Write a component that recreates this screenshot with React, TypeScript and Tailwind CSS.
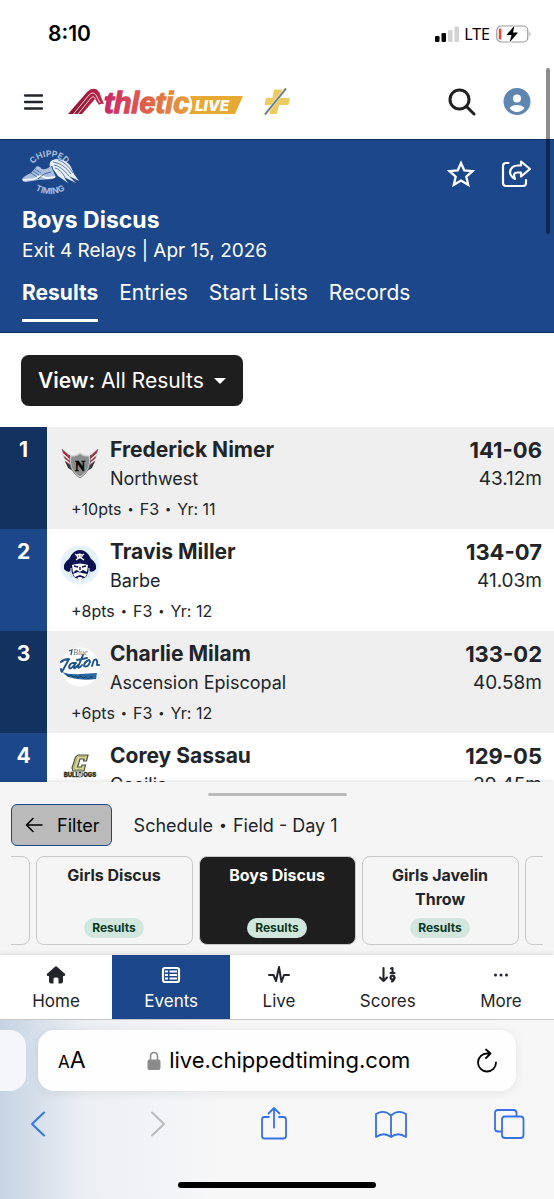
import type { ReactNode } from "react";

type Result = {
  place: number;
  name: string;
  team: string;
  mark: string;
  metric: string;
  meta: string[];
  logo: ReactNode;
};

function WingedShieldLogo() {
  return (
    <svg viewBox="0 0 40 40" className="size-10">
      <path d="M2 6 L12 15 L13 24 L6 20 Z" fill="#a32c40" stroke="#777" strokeWidth=".6" />
      <path d="M38 6 L28 15 L27 24 L34 20 Z" fill="#a32c40" stroke="#777" strokeWidth=".6" />
      <path d="M3 11 L12 19 M4 16 L13 23 M37 11 L28 19 M36 16 L27 23" stroke="#f3f3f3" strokeWidth="1.500" />
      <path d="M5 18 L13 25 L13 28 L8 25 Z M35 18 L27 25 L27 28 L32 25 Z" fill="#34343a" />
      <path d="M11 13 Q17 13 20 10 Q23 13 29 13 Q32 27 20 34 Q8 27 11 13 Z" fill="#8b8c8e" stroke="#d2d2d2" strokeWidth="1.200" />
      <path d="M9.500 12 Q8 28 20 35 Q32 28 30.500 12" fill="none" stroke="#616265" strokeWidth=".7" />
      <text x="20" y="28" textAnchor="middle" fontSize="14" fontWeight="700" fontFamily="Liberation Serif, serif" fill="#050505" stroke="#050505" strokeWidth=".6">N</text>
    </svg>
  );
}

function PirateLogo() {
  return (
    <svg viewBox="0 0 40 40" className="size-10">
      <circle cx="20" cy="20" r="19.500" fill="#e5f1fb" />
      <path d="M4 24 Q3 18 9 14 Q13 5 20 5 Q27 5 31 14 Q37 18 36 24 Q33 28 29 26 L26 32 L20 35 L14 32 L11 26 Q7 28 4 24 Z" fill="#0d1050" />
      <path d="M15 9 L24 15 M24 9 L16 15" stroke="#fff" strokeWidth="1.400" />
      <ellipse cx="19.500" cy="11" rx="3" ry="2.500" fill="#fff" />
      <path d="M18 11h1M20.500 11h1" stroke="#0d1050" />
      <path d="M12 20 Q20 17 28 20 L27 27 L23 25 L20 27 L16 25 L13 28 Z" fill="#f5f8fc" />
      <path d="M14 21 L18 22 M22 22 L26 21 M20 22v3M17 26 L20 28 L24 26" stroke="#0d1050" strokeWidth="1.400" fill="none" />
      <path d="M13 29 L18 27 L22 28 L27 29 L25 32 L20 30 L15 32 Z M17 33 Q20 31 23 33 L20 36Z" fill="#fff" />
      <path d="M11 23v9h4M29 23v9h-4" fill="none" stroke="#cfd7e5" strokeWidth="1.200" />
    </svg>
  );
}

function GatorsLogo() {
  return (
    <svg viewBox="0 0 40 40" className="size-10">
      <circle cx="20" cy="20" r="19.500" fill="#fff" />
      <text x="13" y="8" fontSize="8" fontStyle="italic" fontFamily="Liberation Serif, serif" fill="#557894">Blue</text>
      <path d="M9 4l3-1-1 5" fill="none" stroke="#26577f" strokeWidth="1.300" />
      <g fill="none" stroke="#1c548b" strokeWidth="1.900" strokeLinecap="round" strokeLinejoin="round">
        <path d="M1 15 Q4 12 9 12 L3 23 Q1 27 1 22" />
        <path d="M16 16 Q10 15 9 20 Q10 24 15 17 L14 21 Q15 22 18 18" />
        <path d="M23 8 L18 20 Q19 22 22 18 M17 13 L27 11" />
        <path d="M29 13 Q24 15 24 19 Q28 21 30 15 Q30 12 27 14 M32 19 L34 13 Q38 11 37 18 L39 18" />
      </g>
      <path d="M2 25 Q10 28 20 27 L37 26 L36 32 Q20 34 8 30 Z" fill="#2868a0" />
      <path d="M6 27l2 2 3-1 2 2 3-1 2 2 3-2 2 2 3-1 2 2 3-2 2 1" fill="none" stroke="#12365c" strokeWidth=".8" />
    </svg>
  );
}

function BulldogsLogo() {
  return (
    <svg viewBox="0 0 40 40" className="size-10">
      <path d="M18 6 H28 L26.500 12 H23.500 L24 10 H20 L17.500 18 H21.500 L22 16 H25.500 L24 22 H13 L12 19 L15.500 8 Z" fill="#d7d79c" stroke="#4c533b" strokeWidth="1.200" />
      <path d="M18.500 7.500 H26 M17 9 L13.800 19 L14.500 20.500H22" fill="none" stroke="#aaa96c" />
      <text x="20" y="28" textAnchor="middle" fontSize="6" fontWeight="900" fontFamily="Inter, sans-serif" fill="#30351d" stroke="#30351d" strokeWidth=".3">BULLDOGS</text>
      <path d="M18 22l2 3 2-3 .5 4-2.500 3-2.500-3z" fill="#b6b9b4" />
    </svg>
  );
}

const results: Result[] = [
  { place: 1, name: "Frederick Nimer", team: "Northwest", mark: "141-06", metric: "43.12m", meta: ["+10pts", "F3", "Yr: 11"], logo: <WingedShieldLogo /> },
  { place: 2, name: "Travis Miller", team: "Barbe", mark: "134-07", metric: "41.03m", meta: ["+8pts", "F3", "Yr: 12"], logo: <PirateLogo /> },
  { place: 3, name: "Charlie Milam", team: "Ascension Episcopal", mark: "133-02", metric: "40.58m", meta: ["+6pts", "F3", "Yr: 12"], logo: <GatorsLogo /> },
  { place: 4, name: "Corey Sassau", team: "Cecilia", mark: "129-05", metric: "39.45m", meta: [], logo: <BulldogsLogo /> },
];

function StatusBar() {
  return (
    <div className="flex h-17 shrink-0 items-center justify-between pr-[22px] pl-12">
      <span className="text-[21px] font-semibold text-black">8:10</span>
      <div className="flex items-center gap-1 text-black">
        <svg viewBox="0 0 26 16" className="h-4 w-[26px]">
          <rect x="1" y="10" width="4.500" height="6" rx="1.300" />
          <rect x="7.500" y="7" width="4.500" height="9" rx="1.300" />
          <rect x="14" y="4" width="4.500" height="12" rx="1.300" fill="#d2d2d2" />
          <rect x="20.500" y="0.500" width="4.500" height="15.500" rx="1.300" fill="#d2d2d2" />
        </svg>
        <span className="font-['Noto_Sans',sans-serif] text-base leading-5">LTE</span>
        <svg viewBox="0 0 36 18" className="ml-0.5 h-[18px] w-9">
          <rect x=".8" y="1" width="31" height="16" rx="4.500" fill="none" stroke="#999" strokeWidth="1.200" />
          <path d="M33.500 6.500 Q35.500 9 33.500 11.500Z" fill="#999" />
          <rect x="2.800" y="3.500" width="2.500" height="11" rx="1" fill="#ef4038" />
          <path d="M18.500 .5 L10.500 10 H15.500 L13.500 17.500 L22 7.500 H17 Z" stroke="#fff" strokeWidth="2" />
          <path d="M18.500 .5 L10.500 10 H15.500 L13.500 17.500 L22 7.500 H17 Z" />
        </svg>
      </div>
    </div>
  );
}

function BrandLogo() {
  return (
    <svg viewBox="0 -2 176 36" className="h-9 w-44" role="img" aria-label="AthleticLIVE">
      <defs>
        <linearGradient id="word" gradientUnits="userSpaceOnUse" x1="36" y1="0" x2="123" y2="0">
          <stop offset="0" stopColor="#c9246b" />
          <stop offset=".4" stopColor="#db574d" />
          <stop offset="1" stopColor="#e5a339" />
        </linearGradient>
        <linearGradient id="peak" x1="0" x2="1">
          <stop offset="0" stopColor="#851730" />
          <stop offset="1" stopColor="#c0264f" />
        </linearGradient>
      </defs>
      <path d="M0 28 L19 6 Q23.500 1 29 3.500 Q32 6 33 11 L36 18 Q33 17 31 19 L27 13 L14 28 Z" fill="url(#peak)" />
      <path d="M5.500 28 L21 9 Q25 5 28 9 L32 17 M10 28 L23 12 Q25.500 9 27.500 13" fill="none" stroke="#fff" strokeWidth=".8" />
      <path d="M122 10 H175 L167 28 H121 Q127 20 122 10 Z" fill="#e5a934" />
      <text x="36" y="27" fontSize="29" fontWeight="700" fontStyle="italic" fontFamily="Liberation Sans, sans-serif" fill="url(#word)" stroke="url(#word)" strokeWidth="1.300">thletic</text>
      <text x="127" y="24.500" fontSize="15" fontWeight="900" fontStyle="italic" fontFamily="Inter, sans-serif" fill="#fff">LIVE</text>
    </svg>
  );
}

function SiteHeader() {
  return (
    <header className="flex h-[71px] shrink-0 items-center bg-white px-[23px] pb-1">
      <button aria-label="Open menu" className="flex items-center">
        <svg viewBox="0 0 20 20" className="size-5" stroke="#212529" strokeWidth="2.300" strokeLinecap="round">
          <path d="M2 3.500h17M2 10h17M2 16.500h17" />
        </svg>
      </button>
      <a href="#home" className="ml-[25px]"><BrandLogo /></a>
      <a href="#plus" aria-label="Plus" className="ml-5">
        <svg viewBox="0 0 28 30" className="h-[30px] w-7">
          <path d="M10 2.500 H18 L16.500 11 H26 L24.500 18 H15 L13 27 H5.500 L7 18 H0.500 L2 11 H8.500 Z" fill="#edca62" />
          <path d="M1 27.500 L22 1.500" stroke="#f6e4b1" strokeWidth="3" />
          <path d="M1 27.500 L22 1.500" stroke="#52799a" strokeWidth="1.700" />
        </svg>
      </a>
      <div className="ml-auto flex items-center gap-[27px]">
        <button aria-label="Search">
          <svg viewBox="0 0 28 28" className="size-7" fill="none" stroke="#212121" strokeWidth="3" strokeLinecap="round">
            <circle cx="11.500" cy="11.500" r="9.500" />
            <path d="M18.500 18.500l7.500 7.500" />
          </svg>
        </button>
        <button aria-label="Account">
          <svg viewBox="0 0 28 28" className="size-7">
            <circle cx="14" cy="13.500" r="13.500" fill="#5d87b1" />
            <circle cx="14" cy="10.500" r="4" fill="#fff" />
            <path d="M6.500 20 Q9 17 14 17 Q19 17 21.500 20 Q18.500 24 14 24 Q9.500 24 6.500 20Z" fill="#fff" />
          </svg>
        </button>
      </div>
    </header>
  );
}

function TimingLogo() {
  return (
    <svg viewBox="0 0 58 48" className="h-12 w-[58px]" role="img" aria-label="Chipped Timing">
      <defs>
        <path id="arcTop" d="M7 27 A20 18 0 0 1 48 27" />
        <path id="arcBottom" d="M2 24 A26 22 0 0 0 54 24" />
      </defs>
      <g fill="#a9bddd" fontFamily="Inter, sans-serif" fontWeight="700" textAnchor="middle">
        <text fontSize="8.500"><textPath href="#arcTop" startOffset="50%">CHIPPED</textPath></text>
        <text fontSize="8.500"><textPath href="#arcBottom" startOffset="50%">TIMING</textPath></text>
      </g>
      <path d="M0 31 Q2 28 9 25 L15 18 L18 19 Q20 23 26 20 L29 18 L32 25 L34 29 L31 31 L16 32 L4 34 Q0 34 0 31Z" fill="#a9bddd" />
      <path d="M1 32 L12 31 Q18 26 24 30 L33 29" stroke="#fff" strokeWidth="1.700" fill="none" />
      <path d="M9 25l6 4M11 23l6 4M13 21l6 4M16 31l6-5 7-2" stroke="#3c639f" strokeWidth=".9" fill="none" />
      <path d="M28 19 Q26 12 34 11 Q44 11 49 19 L52 26 L57 33 L47 28 L54 35 L42 29 L46 35 L36 28 L31 21 Q31 16 28 19 Z" fill="#e8eff9" />
      <path d="M31 14 Q41 15 49 26 M32 17 Q39 18 47 28 M33 20 Q38 21 43 29 M36 12 Q44 14 51 25" stroke="#34609f" strokeWidth=".8" fill="none" />
    </svg>
  );
}

const tabs = ["Results", "Entries", "Start Lists", "Records"];

function EventHeader() {
  return (
    <section className="flex shrink-0 flex-col border-y border-[#123061] bg-[#1c478a] px-[22px] pt-2 pb-[10px] text-white">
      <div className="flex items-start justify-between">
        <TimingLogo />
        <div className="flex items-center gap-6 pt-3">
          <button aria-label="Favorite">
            <svg viewBox="0 0 30 30" className="size-[30px]" fill="none" stroke="#fff" strokeWidth="2.300">
              <path d="M15 3 L18.300 10.500 L26.500 11.200 L20.300 16.700 L22.200 24.800 L15 20.500 L7.800 24.800 L9.700 16.700 L3.500 11.200 L11.700 10.500Z" />
            </svg>
          </button>
          <button aria-label="Share">
            <svg viewBox="0 0 32 30" className="h-[30px] w-8" fill="none" stroke="#fff" strokeWidth="2.200" strokeLinecap="round" strokeLinejoin="round">
              <path d="M8.500 3 H6 Q3 3 3 6 V23 Q3 26 6 26 H23 Q26 26 26 23 V20" />
              <path d="M21 1.500 L30 9 L21 16.500 V12.500 H18 Q12 12.500 15 19 Q10 16 10 12 Q11 5.500 18 5.500 H21Z" />
            </svg>
          </button>
        </div>
      </div>
      <h1 className="mt-2 text-[23px] leading-8 font-bold">Boys Discus</h1>
      <p className="text-[19px] leading-[30px]">Exit 4 Relays | Apr 15, 2026</p>
      <nav className="mt-[5px] flex gap-[21px] text-[21px]">
        {tabs.map((tab, i) => (
          <a key={tab} href={"#" + tab} className={i === 0 ? "border-b-3 border-white pb-1 leading-11 font-bold" : "border-b-3 border-transparent pb-1 leading-11"}>
            {tab}
          </a>
        ))}
      </nav>
    </section>
  );
}

function ResultsTable() {
  return (
    <div className="min-h-0 flex-1 overflow-hidden">
      <table className="w-full border-collapse">
        <tbody>
          {results.map((r) => (
            <tr key={r.place} className="group h-[102px] align-top odd:bg-[#efefef] even:bg-white">
              <th scope="row" className="w-[47px] bg-[#1c478a] pt-2 text-[21px] leading-[30px] font-bold text-white group-odd:bg-[#14325f]">{r.place}</th>
              <td className="pt-2 pl-[13px]">
                <div className="flex gap-[10px]">
                  <div className="pt-2">{r.logo}</div>
                  <div>
                    <div className="text-[21px] leading-[30px] font-bold">{r.name}</div>
                    <div className="text-[18px] leading-7">{r.team}</div>
                  </div>
                </div>
                <div className="flex items-center gap-[6px] pl-[11px] text-base leading-8">
                  {r.meta.map((m, i) => (
                    <span key={m} className="flex items-center gap-[6px]">
                      {i > 0 && <span className="text-[11px]">•</span>}
                      {m}
                    </span>
                  ))}
                </div>
              </td>
              <td className="pt-2 pr-3 text-right">
                <div className="text-[22px] leading-[30px] font-bold">{r.mark}</div>
                <div className="text-[19px] leading-7">{r.metric}</div>
              </td>
            </tr>
          ))}
        </tbody>
      </table>
    </div>
  );
}

const scheduleCards = [
  { id: "previous", title: "" },
  { id: "girls-discus", title: "Girls Discus" },
  { id: "boys-discus", title: "Boys Discus" },
  { id: "girls-javelin", title: "Girls Javelin Throw" },
  { id: "next", title: "" },
];

function SchedulePanel() {
  return (
    <section className="shrink-0 bg-[#f5f5f5] px-[11px] pt-[11px] pb-[10px] shadow-[0_-1px_4px_rgba(0,0,0,0.12)]">
      <div className="mx-auto h-[3px] w-[139px] rounded-full bg-[#bababa]" />
      <div className="mt-2 flex items-center gap-[22px] text-[18px]">
        <button className="flex h-[42px] items-center gap-[14px] rounded-md border border-[#1c478a] bg-[#bababa] pr-[11px] pl-[13px] text-black">
          <svg viewBox="0 0 18 18" className="size-[18px]" fill="none" stroke="#000" strokeWidth="1.600" strokeLinecap="round" strokeLinejoin="round">
            <path d="M17 9H1.500M8 2.500L1.500 9L8 15.500" />
          </svg>
          Filter
        </button>
        <span className="flex items-center gap-[6px]">
          Schedule <span className="text-sm">•</span> Field - Day 1
        </span>
      </div>
      <div className="mt-[10px] flex justify-center gap-[6px] overflow-hidden">
        {scheduleCards.map((card) =>
          card.title ? (
            <a key={card.id} href={"#" + card.id} className={card.id === "boys-discus" ? "flex h-[89px] w-[157px] shrink-0 flex-col items-center justify-between rounded-lg border border-[#c9c9c9] bg-[#1e1e1e] px-5 pt-[6px] pb-[6px] text-white" : "flex h-[89px] w-[157px] shrink-0 flex-col items-center justify-between rounded-lg border border-[#c9c9c9] px-5 pt-[6px] pb-[6px]"}>
              <span className="text-center text-base leading-6 font-bold">{card.title}</span>
              <span className="rounded-full bg-[#d1e7dd] px-2 text-xs leading-5 font-bold text-[#0a3622]">Results</span>
            </a>
          ) : (
            <div key={card.id} className="h-[89px] w-[157px] shrink-0 rounded-lg border border-[#c9c9c9]" />
          ),
        )}
      </div>
    </section>
  );
}

const navItems: { label: string; icon: ReactNode }[] = [
  {
    label: "Home",
    icon: (
      <svg viewBox="0 0 20 20" className="size-5" fill="currentColor">
        <path d="M9 1.700 Q10 .8 11 1.700 L19.200 9 Q19.600 11 18 11 H17 V16 Q17 18.500 14.500 18.500 H12.500 V14 Q12.500 12.500 11 12.500 H9 Q7.500 12.500 7.500 14 V18.500 H5.500 Q3 18.500 3 16 V11 H2 Q.4 11 .8 9Z" />
      </svg>
    ),
  },
  {
    label: "Events",
    icon: (
      <svg viewBox="0 0 20 20" className="size-5" fill="none" stroke="currentColor">
        <rect x="2" y="3" width="16" height="14" rx="2" strokeWidth="2.200" />
        <path d="M4 6.500h3M4 10h3M4 13.500h3M8.500 6.500H16M8.500 10H16M8.500 13.500H16" strokeWidth="2" />
      </svg>
    ),
  },
  {
    label: "Live",
    icon: (
      <svg viewBox="0 0 22 20" className="h-5 w-[22px]" fill="none" stroke="currentColor" strokeWidth="2" strokeLinecap="round" strokeLinejoin="round">
        <path d="M1 10h4.500L8 16L11 2L13.500 17L16 10H21" />
      </svg>
    ),
  },
  {
    label: "Scores",
    icon: (
      <svg viewBox="0 0 20 20" className="size-5" fill="none" stroke="currentColor" strokeWidth="2.100" strokeLinecap="round" strokeLinejoin="round">
        <path d="M5.500 3v13M2 12.500L5.500 16L9 12.500M13 3.500L14.500 3V7.500M12.500 8h4" />
        <circle cx="14.500" cy="12.500" r="1.900" />
        <path d="M16.400 12.500Q16.500 15 14 16.500" />
      </svg>
    ),
  },
  {
    label: "More",
    icon: (
      <svg viewBox="0 0 20 20" className="size-5" fill="currentColor">
        <circle cx="4.500" cy="10" r="1.500" />
        <circle cx="10" cy="10" r="1.500" />
        <circle cx="15.500" cy="10" r="1.500" />
      </svg>
    ),
  },
];

function BottomNav() {
  return (
    <nav className="flex h-16 shrink-0 bg-white shadow-[0_-1px_5px_rgba(0,0,0,0.12)]">
      {navItems.map((item) => (
        <a key={item.label} href={"#" + item.label} className={item.label === "Events" ? "flex flex-auto flex-col items-center bg-[#1c478a] pt-[10px] text-white" : "flex flex-auto flex-col items-center pt-[10px]"}>
          {item.icon}
          <span className="mt-[3px] text-[17px] leading-[26px]">{item.label}</span>
        </a>
      ))}
    </nav>
  );
}

function BrowserBar() {
  return (
    <footer className="shrink-0 border-t border-[#c6c7c9] bg-[#f7f7f8] bg-linear-to-r from-[#c5d3e3] via-[#eceff4] via-15% to-[#f7f7f8] to-40% pt-[10px] pb-[11px] text-black">
      <div className="flex gap-3 pr-[38px]">
        <div className="w-[26px] rounded-r-2xl bg-[#f4f6f9]" />
        <div className="flex h-[61px] flex-1 items-center justify-between rounded-2xl bg-[#fefefe] pr-4 pl-5 shadow-[0_2px_12px_rgba(0,0,0,0.08)]">
          <button aria-label="Page settings" className="flex items-baseline">
            <span className="text-[17px]">A</span>
            <span className="text-[23px]">A</span>
          </button>
          <div className="flex items-center gap-2">
            <svg viewBox="0 0 14 20" className="h-5 w-[14px]">
              <path d="M3.500 9V5.500Q3.500 1.500 7 1.500T10.500 5.500V9" fill="none" stroke="#8b8b8b" strokeWidth="1.600" />
              <rect x=".5" y="8.500" width="13" height="10.500" rx="2" fill="#8b8b8b" />
            </svg>
            <span className="text-[22px]">live.chippedtiming.com</span>
          </div>
          <button aria-label="Reload">
            <svg viewBox="0 0 28 28" className="size-7" fill="none" stroke="#000" strokeWidth="1.800" strokeLinecap="round" strokeLinejoin="round">
              <path d="M18.500 6.500H15A9 9 0 1 0 24 15.500M14 2.500L18.500 6.500L14 11" />
            </svg>
          </button>
        </div>
      </div>
      <div className="mt-[15px] flex items-center justify-between pr-7 pl-[22px] text-[#3672e4]">
        <button aria-label="Back">
          <svg viewBox="0 0 34 36" className="h-9 w-[34px]" fill="none" stroke="currentColor" strokeWidth="2" strokeLinecap="round" strokeLinejoin="round"><path d="M22 6.500L10 18L22 29.500" /></svg>
        </button>
        <button aria-label="Forward" className="text-[#b9babc]">
          <svg viewBox="0 0 34 36" className="h-9 w-[34px]" fill="none" stroke="currentColor" strokeWidth="2" strokeLinecap="round" strokeLinejoin="round"><path d="M12 6.500L24 18L12 29.500" /></svg>
        </button>
        <button aria-label="Share page">
          <svg viewBox="0 0 34 36" className="h-9 w-[34px]" fill="none" stroke="currentColor" strokeWidth="1.800" strokeLinecap="round" strokeLinejoin="round"><path d="M12 11H7.500Q5 11 5 13.500V30Q5 32.500 7.500 32.500H26.500Q29 32.500 29 30V13.500Q29 11 26.500 11H22M17 21.500V2M11.500 7.500L17 2L22.500 7.500" /></svg>
        </button>
        <button aria-label="Bookmarks">
          <svg viewBox="0 0 34 36" className="h-9 w-[34px]" fill="none" stroke="currentColor" strokeWidth="1.800" strokeLinecap="round" strokeLinejoin="round"><path d="M16 9.500Q9 3 1 8V31Q9 25.500 16 31Q23 25.500 31 31V8Q23 3 16 9.500V31" /></svg>
        </button>
        <button aria-label="Tabs">
          <svg viewBox="0 0 34 36" className="h-9 w-[34px]" fill="none" stroke="currentColor" strokeWidth="1.800" strokeLinejoin="round"><rect x="10" y="10.500" width="21.500" height="21.500" rx="3" /><path d="M10 25.500H6Q3 25.500 3 22.500V7Q3 4 6 4H21.500Q24.500 4 24.500 7V10.500" /></svg>
        </button>
      </div>
      <div className="mx-auto mt-10 h-[6px] w-[198px] rounded-full bg-black" />
    </footer>
  );
}

export default function App() {
  return (
    <div className="relative flex h-screen flex-col overflow-hidden bg-white font-[Inter,'Liberation_Sans',sans-serif] text-[#212529]">
      <StatusBar />
      <SiteHeader />
      <EventHeader />
      <div className="shrink-0 px-[21px] pt-[22px] pb-[21px]">
        <button className="flex h-[51px] items-center rounded-lg bg-[#1e1e1e] px-[17px] text-[21px] text-white">
          <span><b className="font-semibold">View:</b> All Results</span>
          <svg viewBox="0 0 12 8" className="ml-[10px] h-2 w-3"><path d="M0 1h12L6 7z" fill="#fff" /></svg>
        </button>
      </div>
      <ResultsTable />
      <SchedulePanel />
      <BottomNav />
      <BrowserBar />
      <div className="absolute top-17 right-1 h-[166px] w-1 rounded-full bg-black/45" />
    </div>
  );
}
